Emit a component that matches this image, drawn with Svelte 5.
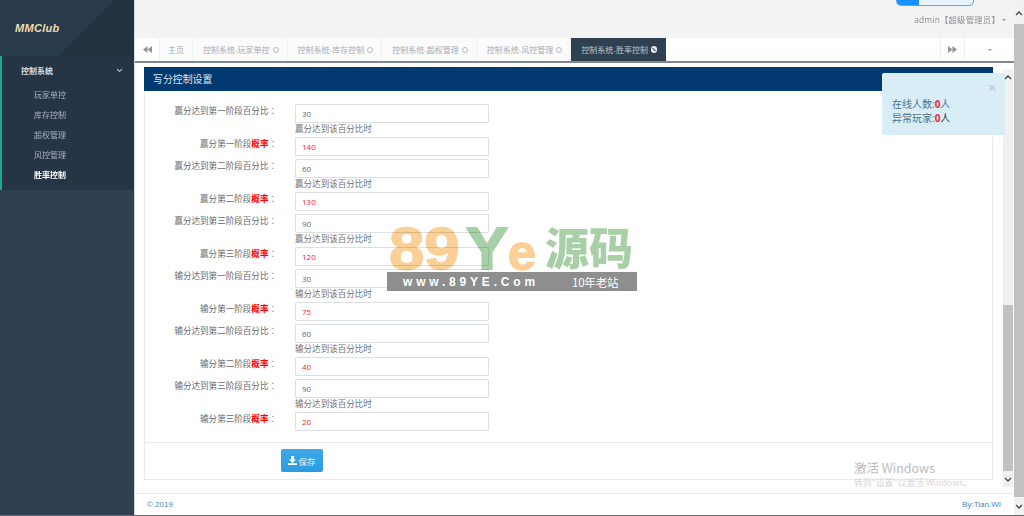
<script>
  const tabs = ['玩家单控', '库存控制', '超权管理', '风控管理', '胜率控制'];
  const menu = ['玩家单控', '库存控制', '超权管理', '风控管理', '胜率控制'];
  const stages = [
    { pre: '赢分', n: '一', pct: '30', rate: '140' },
    { pre: '赢分', n: '二', pct: '60', rate: '130' },
    { pre: '赢分', n: '三', pct: '90', rate: '120' },
    { pre: '输分', n: '一', pct: '30', rate: '75' },
    { pre: '输分', n: '二', pct: '60', rate: '40' },
    { pre: '输分', n: '三', pct: '90', rate: '20' }
  ];
</script>

<div class="app">
  <aside class="side">
    <div class="logo">MMClub</div>
    <div class="menu">
      <div class="group"><span>控制系统</span>
        <svg width="7" height="5" viewBox="0 0 7 5"><path d="M1 1l2.500 2.500L6 1" fill="none" stroke="#aab4bd" stroke-width="1.100"/></svg>
      </div>
      {#each menu as m, i}
        <div class="item" class:on={i === 4}>{m}</div>
      {/each}
    </div>
  </aside>

  <main class="main">
    <header class="top">
      <div class="toggle"><span class="toggle-on"></span></div>
      <div class="user">admin【超级管理员】<i class="caret"></i></div>
    </header>

    <nav class="tabs">
      <div class="nav-btn left">
        <svg width="9" height="7" viewBox="0 0 9 7"><path d="M4.500 0v7L0 3.500zM9 0v7L4.500 3.500z" fill="#8d949a"/></svg>
      </div>
      <div class="tab home">主页</div>
      {#each tabs as t, i}
        <div class="tab" class:active={i === 4}>控制系统-{t}<i class="close">{#if i === 4}<b></b>{/if}</i></div>
      {/each}
      <div class="spacer"></div>
      <div class="nav-btn right">
        <svg width="9" height="7" viewBox="0 0 9 7"><path d="M0 0v7l4.500-3.500zM4.500 0v7L9 3.500z" fill="#8d949a"/></svg>
      </div>
      <div class="nav-btn drop"><i class="caret"></i></div>
    </nav>

    <div class="body">
      <div class="content">
        <section class="panel">
          <h2 class="panel-title">写分控制设置</h2>
          <div class="form">
            {#each stages as s}
              <div class="row">
                <label for={s.pre + s.n + 'p'}>{s.pre}达到第{s.n}阶段百分比<span class="colon">：</span></label>
                <div class="field">
                  <input id={s.pre + s.n + 'p'} value={s.pct} />
                  <div class="hint">{s.pre}达到该百分比时</div>
                </div>
              </div>
              <div class="row">
                <label for={s.pre + s.n + 'r'}>{s.pre}第{s.n}阶段<b>概率</b><span class="colon">：</span></label>
                <div class="field">
                  <input class="red" id={s.pre + s.n + 'r'} value={s.rate} />
                </div>
              </div>
            {/each}
          </div>
          <div class="actions">
            <button class="save">
              <svg width="9" height="9" viewBox="0 0 9 9"><path d="M3 0h3v3.500h2L4.500 7 1 3.500h2zM0 7.200h9V9H0z" fill="#fff"/></svg>保存
            </button>
          </div>
        </section>
      </div>
      <div class="scroll inner">
        <span class="arrow">
          <svg width="8" height="5" viewBox="0 0 8 5"><path d="M1 4l3-3 3 3" fill="none" stroke="#444" stroke-width="1.300"/></svg>
        </span>
        <div class="track"><div class="thumb"></div></div>
        <span class="arrow">
          <svg width="8" height="5" viewBox="0 0 8 5"><path d="M1 1l3 3 3-3" fill="none" stroke="#444" stroke-width="1.300"/></svg>
        </span>
      </div>

      <div class="toast">
        <span class="x">×</span>
        <p>在线人数:<b>0</b>人</p>
        <p>异常玩家:<b>0</b><em>人</em></p>
      </div>

      <div class="activate">
        <div class="a1">激活 Windows</div>
        <div class="a2">转到"设置"以激活 Windows。</div>
      </div>

      <div class="watermark">
        <div class="wm-top"><span class="o nums">89</span><span class="g y">Y</span><span class="o e">e</span><span class="g cjk">源码</span></div>
        <div class="wm-bar"><span class="url">www.89YE.Com</span><span class="old">10年老站</span></div>
      </div>
    </div>

    <footer class="foot"><span>© 2019</span><span>By:Tian.WI</span></footer>
  </main>

  <div class="scroll outer">
    <span class="arrow">
      <svg width="8" height="5" viewBox="0 0 8 5"><path d="M1 4l3-3 3 3" fill="none" stroke="#444" stroke-width="1.300"/></svg>
    </span>
    <div class="track"><div class="thumb"></div></div>
    <span class="arrow">
      <svg width="8" height="5" viewBox="0 0 8 5"><path d="M1 1l3 3 3-3" fill="none" stroke="#444" stroke-width="1.300"/></svg>
    </span>
  </div>
</div>

<style>
  :global(body) {
    margin: 0;
    background: #fff;
  }
  .app {
    display: flex;
    width: 1024px;
    height: 515px;
    border-bottom: 1px solid #6a6a6a;
    overflow: hidden;
    font-family: "Open Sans", "Noto Sans CJK SC", sans-serif;
    font-size: 8.550px;
    color: #676a6c;
    filter: blur(0.35px);
  }
  .side {
    width: 134px;
    flex: none;
    background: #2f4052;
    border-right: 1px solid #d5d9dd;
    display: flex;
    flex-direction: column;
  }
  .logo {
    height: 56px;
    box-sizing: border-box;
    padding: 21px 0 0 15px;
    background: linear-gradient(135deg, #293a4c 0 60%, #233241 60%);
    color: #f0dcae;
    font: italic bold 11px/14px "Liberation Sans", sans-serif;
    letter-spacing: .3px;
  }
  .menu {
    height: 134px;
    box-sizing: border-box;
    background: #263545;
    border-left: 2px solid #19aa8d;
    padding-top: 7px;
    color: #a7b1c2;
  }
  .group {
    display: flex;
    justify-content: space-between;
    align-items: center;
    height: 15px;
    margin-bottom: 7px;
    padding: 0 11px 0 19px;
    font-size: 8px;
    font-weight: 700;
    color: #d8dde2;
  }
  .item {
    height: 20px;
    line-height: 20px;
    padding-left: 32px;
    font-size: 8px;
  }
  .item.on {
    color: #fff;
    font-weight: 700;
  }
  .main {
    flex: 1;
    min-width: 0;
    display: flex;
    flex-direction: column;
  }
  .top {
    height: 38px;
    flex: none;
    box-sizing: border-box;
    background: #f3f3f4;
    display: flex;
    flex-direction: column;
    align-items: flex-end;
  }
  .toggle {
    width: 78px;
    height: 6px;
    box-sizing: border-box;
    margin-right: 40px;
    border: 1px solid #55a8f0;
    border-top: 0;
    border-radius: 0 0 5px 5px;
    background: #e8f4fd;
    overflow: hidden;
  }
  .toggle-on {
    display: block;
    width: 22px;
    height: 100%;
    background: #1890ff;
  }
  .user {
    margin: 8px 8px 0 0;
    color: #8a8d90;
    font-size: 8.400px;
    line-height: 12px;
    letter-spacing: .2px;
    display: flex;
    align-items: center;
    gap: 2px;
  }
  .caret {
    display: block;
    width: 0;
    height: 0;
    border: 2.500px solid transparent;
    border-top-color: #999;
    border-bottom: 0;
  }
  .tabs {
    height: 25px;
    flex: none;
    box-sizing: border-box;
    display: flex;
    background: #fff;
    border-bottom: 2px solid #7d8894;
  }
  .nav-btn {
    display: flex;
    align-items: center;
    justify-content: center;
    background: #fff;
  }
  .nav-btn.left {
    width: 25px;
    box-sizing: border-box;
    border-right: 1px solid #f0f1f2;
  }
  .nav-btn.right {
    width: 24px;
    box-sizing: border-box;
    border-left: 1px solid #eceef0;
  }
  .nav-btn.drop {
    width: 50px;
    box-sizing: border-box;
    border-left: 1px solid #eceef0;
  }
  .spacer {
    flex: 1;
  }
  .tab {
    display: flex;
    align-items: center;
    gap: 3px;
    width: 94.600px;
    box-sizing: border-box;
    padding-left: 10px;
    background: #fbfbfc;
    border-right: 1px solid #f0f1f2;
    color: #a8acb0;
    font-size: 8px;
    white-space: nowrap;
  }
  .tab.home {
    width: 33px;
    padding-left: 8px;
  }
  .tab.active {
    background: #2f4050;
    color: #bcc4cc;
    border-right: 0;
  }
  .close {
    display: block;
    width: 6px;
    height: 6px;
    box-sizing: border-box;
    border: 1.500px solid #b5b9bd;
    border-radius: 50%;
  }
  .active .close {
    width: 6.500px;
    height: 6.500px;
    border: 0;
    background: #e8ebee;
    position: relative;
  }
  .active .close b {
    position: absolute;
    left: 1.250px;
    top: 2.750px;
    width: 4px;
    height: 1px;
    background: #2f4050;
    transform: rotate(45deg);
  }
  .body {
    position: relative;
    flex: 1;
    min-height: 0;
    display: flex;
  }
  .content {
    flex: 1;
    min-width: 0;
    padding: 4px 10px 0 9px;
    background: #fff;
    overflow: hidden;
  }
  .panel {
    border: 1px solid #e7eaec;
    border-top: 0;
    height: 413px;
    box-sizing: border-box;
    background: #fff;
  }
  .panel-title {
    margin: 0 -1px;
    height: 24px;
    box-sizing: border-box;
    padding-left: 9px;
    background: #003a70;
    color: #dfe6ee;
    font-size: 9.900px;
    font-weight: 400;
    line-height: 25px;
  }
  .form {
    padding-top: 13px;
    height: 352px;
    box-sizing: border-box;
    border-bottom: 1px solid #e7eaec;
  }
  .row {
    display: flex;
    margin-bottom: 3.100px;
  }
  label {
    width: 132px;
    flex: none;
    text-align: right;
    line-height: 12px;
    color: #676a6c;
    padding-right: 18px;
    white-space: nowrap;
  }
  label b {
    color: #f00;
    font-weight: 700;
  }
  .colon {
    font-family: "Noto Sans CJK TC", sans-serif;
  }
  .field {
    width: 194px;
  }
  input {
    display: block;
    width: 100%;
    height: 19px;
    box-sizing: border-box;
    border: 1px solid #dde0e2;
    border-radius: 1px;
    padding: 0 6px 1px;
    background: #fff;
    font: 8px "Open Sans", "Noto Sans CJK SC", sans-serif;
    color: #666;
  }
  input.red {
    color: #ed2a2a;
  }
  .hint {
    height: 14px;
    line-height: 12px;
    margin-bottom: -3.100px;
    white-space: nowrap;
    color: #6f7275;
  }
  .actions {
    padding: 6px 0 0 136px;
  }
  .save {
    display: flex;
    align-items: center;
    gap: 1px;
    justify-content: center;
    width: 42px;
    height: 23px;
    border: 0;
    border-radius: 2px;
    padding: 0;
    background: linear-gradient(#3fa9e8, #2a9ae0);
    color: #e8f5fe;
    font: 8.500px "Open Sans", "Noto Sans CJK SC", sans-serif;
  }
  .toast {
    position: absolute;
    top: 10px;
    right: 9px;
    width: 123px;
    height: 62px;
    box-sizing: border-box;
    padding: 24px 0 0 10px;
    border-radius: 2px;
    background: #d9edf7;
    color: #47768f;
    font-size: 10px;
    line-height: 14px;
  }
  .toast p {
    margin: 0;
  }
  .toast b {
    color: #f0282e;
  }
  .toast em {
    font-style: normal;
    color: #2d3a48;
  }
  .x {
    position: absolute;
    right: 9px;
    top: 9px;
    color: #c4ced4;
    font: 700 13px/11px "Liberation Sans", sans-serif;
  }
  .activate {
    position: absolute;
    left: 719px;
    top: 396px;
    color: #bcbcbc;
    font-family: "Noto Sans CJK SC", "Open Sans", sans-serif;
    white-space: nowrap;
  }
  .a1 {
    font-size: 12.500px;
    line-height: 17px;
  }
  .a2 {
    font-size: 8.800px;
    line-height: 14px;
    color: #d6d6d6;
  }
  .watermark {
    position: absolute;
    left: 252px;
    top: 163px;
    width: 250px;
    pointer-events: none;
  }
  .wm-top {
    height: 46px;
    display: flex;
    align-items: flex-end;
    font: 700 60px/38px "Liberation Sans", sans-serif;
    white-space: nowrap;
    mix-blend-mode: multiply;
  }
  .o {
    color: #fbd096;
  }
  .g {
    color: #a9cfa6;
  }
  .nums {
    display: block;
    width: 77px;
    margin-left: 2px;
    padding-bottom: 4px;
    transform: scaleX(1.060);
    transform-origin: left bottom;
    -webkit-text-stroke: 1.500px #fbd096;
  }
  .y {
    display: block;
    width: 42px;
    padding-bottom: 4px;
    transform: scaleX(1.050);
    transform-origin: left bottom;
    -webkit-text-stroke: 2px #a9cfa6;
  }
  .e {
    display: block;
    width: 38px;
    font-size: 50px;
    line-height: 30px;
    padding-bottom: 4px;
    -webkit-text-stroke: 1.500px #fbd096;
  }
  .cjk {
    display: block;
    padding-bottom: 3px;
    margin-left: -1px;
    font: 900 44px/46px "Noto Sans CJK SC", sans-serif;
  }
  .wm-bar {
    height: 19px;
    background: #8e8e8e;
    display: flex;
    align-items: center;
    color: #fff;
  }
  .url {
    width: 185px;
    padding-left: 16px;
    box-sizing: border-box;
    font: 700 12px "Liberation Sans", sans-serif;
    letter-spacing: 3.800px;
    white-space: nowrap;
  }
  .old {
    font: 11.500px "Noto Sans CJK SC", sans-serif;
    letter-spacing: -.2px;
    white-space: nowrap;
  }
  .scroll {
    flex: none;
    width: 10px;
    display: flex;
    flex-direction: column;
  }
  .scroll.inner {
    margin: 6px 1px 6px 0;
  }
  .arrow {
    height: 16px;
    flex: none;
    display: flex;
    align-items: center;
    justify-content: center;
    background: #f1f1f1;
  }
  .track {
    flex: 1;
    display: flex;
    flex-direction: column;
    justify-content: flex-end;
    background: #f1f1f1;
  }
  .thumb {
    background: #c1c1c1;
  }
  .inner .thumb {
    height: 166px;
  }
  .outer .thumb {
    height: 473px;
  }
  .outer .arrow:first-child {
    height: 24px;
    padding-top: 2px;
    box-sizing: border-box;
  }
  .outer .arrow:last-child {
    height: 18px;
  }
  .foot {
    height: 22px;
    flex: none;
    box-sizing: border-box;
    display: flex;
    justify-content: space-between;
    align-items: center;
    padding: 0 13px 0 12px;
    border-top: 1px solid #e7eaec;
    background: #fff;
    color: #4f86b8;
    font: 8px "Liberation Sans", sans-serif;
  }
</style>
